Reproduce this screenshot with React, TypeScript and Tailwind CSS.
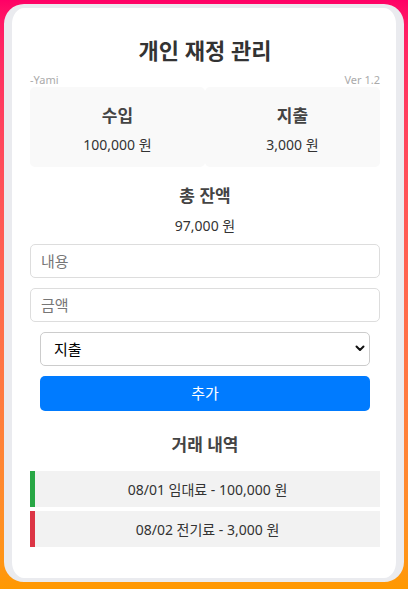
import React from "react";

const font = { fontFamily: '"Noto Sans", "Noto Sans CJK KR", sans-serif' };

export default function App() {
  return (
    <div
      className="w-[408px] h-[589px] bg-gradient-to-b from-[#ff0066] to-[#ff9900] pt-[4px] px-[4px] overflow-hidden"
      style={font}
    >
      <div className="h-[578px] rounded-[20px] border-x-[8px] border-y-[4px] border-[#eaebef] bg-white pl-[18px] pr-[16px] pt-[27px] flex flex-col">
        <h1 className="text-[22px] leading-[30px] font-bold text-[#333] text-center">개인 재정 관리</h1>
        <div className="mt-[8px] flex justify-between text-[11px] leading-[14px] text-[#aaa]">
          <span>-Yami</span>
          <span>Ver 1.2</span>
        </div>
        <div className="grid grid-cols-2 h-[80px]">
          <div className="bg-[#f9f9f9] rounded-[5px] flex flex-col items-center pt-[17px]">
            <div className="text-[17px] leading-[24px] font-bold text-[#444]">수입</div>
            <div className="mt-[7px] text-[14px] leading-[20px] text-[#333]">100,000 원</div>
          </div>
          <div className="bg-[#f9f9f9] rounded-[5px] flex flex-col items-center pt-[17px]">
            <div className="text-[17px] leading-[24px] font-bold text-[#444]">지출</div>
            <div className="mt-[7px] text-[14px] leading-[20px] text-[#333]">3,000 원</div>
          </div>
        </div>
        <div className="mt-[17px] text-[17px] leading-[24px] font-bold text-[#444] text-center">총 잔액</div>
        <div className="mt-[8px] text-[14px] leading-[20px] text-[#333] text-center">97,000 원</div>
        <input
          className="mt-[8px] h-[34px] w-full rounded-[5px] border border-[#ddd] px-[10px] text-[15px] text-[#333] placeholder:text-[#777] outline-none"
          placeholder="내용"
          style={font}
        />
        <input
          className="mt-[10px] h-[34px] w-full rounded-[5px] border border-[#ddd] px-[10px] text-[15px] text-[#333] placeholder:text-[#777] outline-none"
          placeholder="금액"
          style={font}
        />
        <div className="mx-[10px] mt-[10px] relative">
          <select
            className="appearance-none h-[34px] w-full rounded-[5px] border border-[#ccc] bg-white pl-[13px] text-[15px] font-normal text-black outline-none"
            defaultValue="expense"
            style={font}
          >
            <option value="income">수입</option>
            <option value="expense">지출</option>
          </select>
          <svg
            className="absolute right-[5px] top-[13px] pointer-events-none"
            width="10"
            height="7"
            viewBox="0 0 10 7"
          >
            <path d="M1.5 1.5 L5 5 L8.5 1.5" fill="none" stroke="#111" strokeWidth="2" strokeLinecap="round" strokeLinejoin="round" />
          </svg>
        </div>
        <button
          className="mx-[10px] mt-[10px] h-[35px] rounded-[5px] bg-[#007bff] text-white text-[15px]"
          style={font}
        >
          추가
        </button>
        <div className="mt-[22px] text-[17px] leading-[24px] font-bold text-[#444] text-center">거래 내역</div>
        <div className="mt-[14px] flex flex-col gap-[4px]">
          <div className="h-[36px] bg-[#f2f2f2] border-l-[5px] border-[#28a745] flex items-center justify-center text-[14px] text-[#333]">
            08/01 임대료 - 100,000 원
          </div>
          <div className="h-[36px] bg-[#f2f2f2] border-l-[5px] border-[#dc3545] flex items-center justify-center text-[14px] text-[#333]">
            08/02 전기료 - 3,000 원
          </div>
        </div>
      </div>
    </div>
  );
}
